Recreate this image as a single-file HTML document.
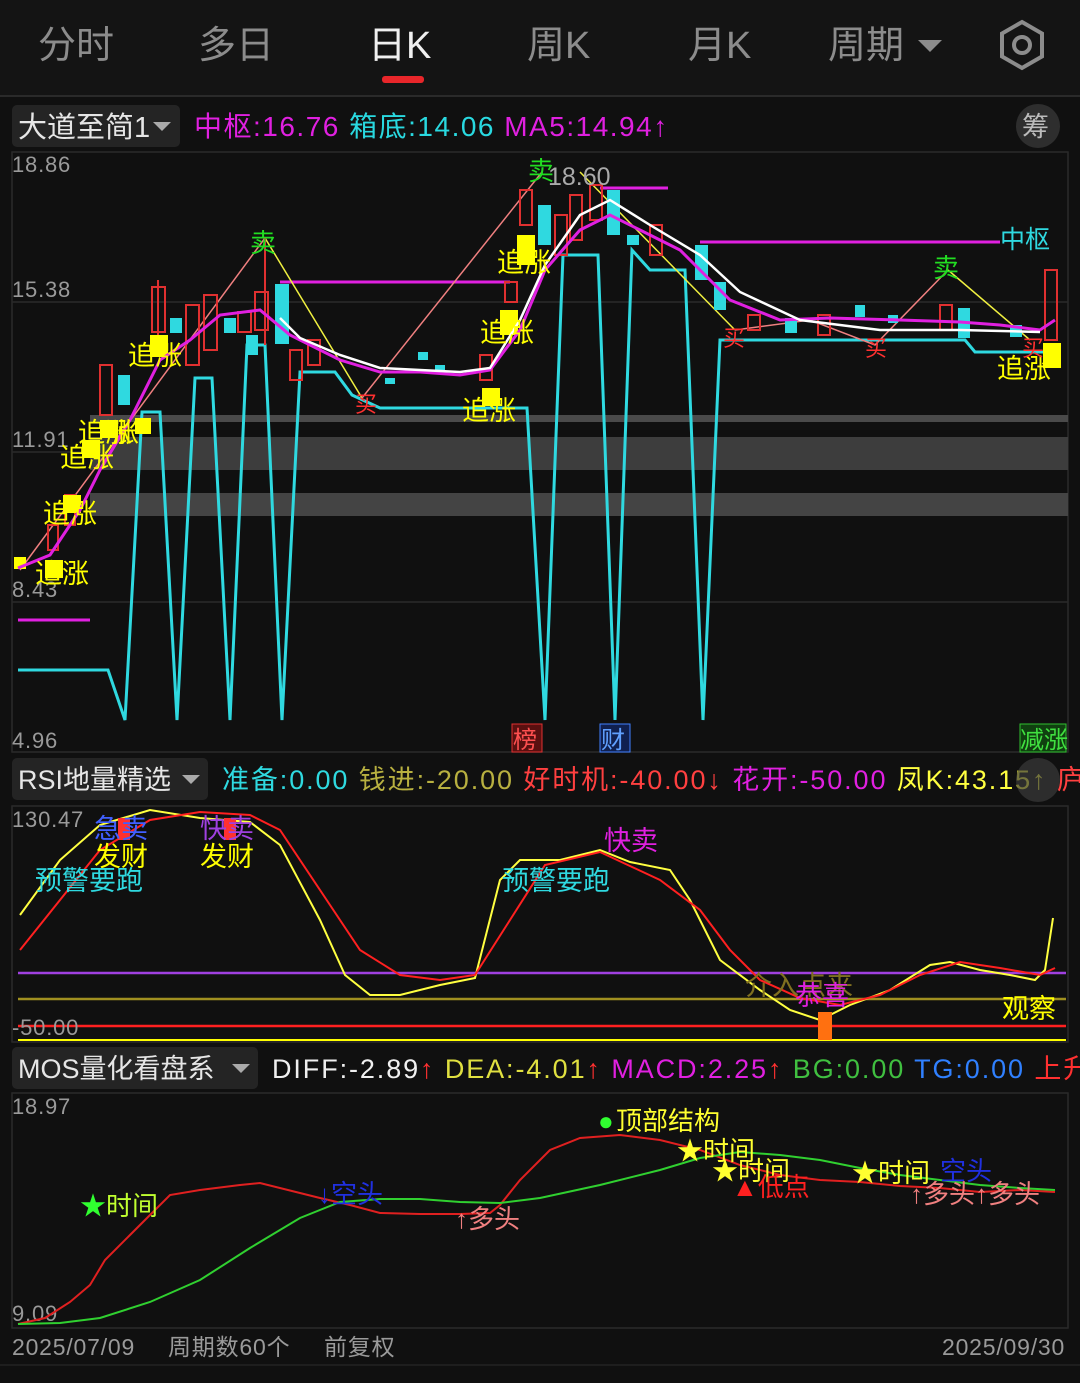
<!DOCTYPE html>
<html><head><meta charset="utf-8"><style>
body{margin:0;background:#101010;width:1080px;height:1383px;overflow:hidden;font-family:"Liberation Sans","Noto Sans CJK SC",sans-serif}
svg{position:absolute;left:0;top:0}
text{font-family:"Liberation Sans","Noto Sans CJK SC",sans-serif}
</style></head><body>
<svg width="1080" height="1383" viewBox="0 0 1080 1383">
<rect width="1080" height="1383" fill="#101010"/>
<rect width="1080" height="95" fill="#141414"/>
<g font-size="38" fill="#8c8c8c">
<text x="38" y="58">分时</text><text x="198" y="58">多日</text>
<text x="368" y="58" fill="#f0f0f0">日K</text>
<text x="527" y="58">周K</text><text x="688" y="58">月K</text><text x="828" y="58">周期</text>
</g>
<path d="M918 40h24l-12 12z" fill="#8c8c8c"/>
<rect x="382" y="76" width="42" height="7" rx="3" fill="#e8262a"/>
<path d="M1022 22l20 11.5v23L1022 68l-20-11.5v-23z" fill="none" stroke="#8c8c8c" stroke-width="4"/>
<circle cx="1022" cy="45" r="8" fill="none" stroke="#8c8c8c" stroke-width="4"/>
<line x1="0" y1="96" x2="1080" y2="96" stroke="#2a2a2a" stroke-width="2"/>

<rect x="12" y="105" width="168" height="42" rx="5" fill="#242424"/>
<text x="18" y="137" font-size="29" fill="#e6e6e6">大道至简1</text>
<path d="M153 122h18l-9 9z" fill="#aaa"/>
<text x="194" y="136" font-size="28" letter-spacing="1.5"><tspan fill="#e020e0">中枢:16.76 </tspan><tspan fill="#29d9e0">箱底:14.06 </tspan><tspan fill="#e020e0">MA5:14.94↑</tspan></text>
<circle cx="1038" cy="126" r="22" fill="#2e2e2e"/><text x="1022" y="136" font-size="27" fill="#bbb">筹</text>
<rect x="12" y="152" width="1056" height="600" fill="none" stroke="#2a2a2a" stroke-width="1.5"/>
<g stroke="#2a2a2a" stroke-width="1.5"><line x1="12" y1="302" x2="1068" y2="302"/><line x1="12" y1="452" x2="1068" y2="452"/><line x1="12" y1="602" x2="1068" y2="602"/></g>
<rect x="90" y="415" width="978" height="7" fill="#4a4a4a"/>
<rect x="90" y="437" width="978" height="33" fill="#3d3d3d"/>
<rect x="90" y="493" width="978" height="23" fill="#444"/>
<g font-size="22" fill="#9a9a9a" letter-spacing="0.8"><text x="12" y="172">18.86</text><text x="12" y="297">15.38</text><text x="12" y="447">11.91</text><text x="12" y="597">8.43</text><text x="12" y="748">4.96</text></g>

<polyline fill="none" stroke="#2fd9e0" stroke-width="3" points="18,670 108,670 125,720 142,412 160,412 177,720 195,378 212,378 230,720 247,345 265,345 282,720 300,372 335,372 352,395 380,408 527,408 545,720 563,255 598,255 615,720 632,250 650,270 685,270 703,720 720,340 965,340 975,352 1060,352"/>
<g stroke="#e020e0" stroke-width="3"><line x1="280" y1="282" x2="510" y2="282"/><line x1="600" y1="188" x2="668" y2="188"/><line x1="700" y1="242" x2="1000" y2="242"/><line x1="18" y1="620" x2="90" y2="620"/></g>
<polyline fill="none" stroke="#f08080" stroke-width="1.5" points="20,570 265,238"/>
<polyline fill="none" stroke="#f0f040" stroke-width="1.5" points="265,238 362,398"/>
<polyline fill="none" stroke="#f08080" stroke-width="1.5" points="362,398 542,172"/>
<polyline fill="none" stroke="#f0f040" stroke-width="1.5" points="580,172 735,330"/>
<polyline fill="none" stroke="#f08080" stroke-width="1.5" points="735,330 810,320 875,345 948,270"/>
<polyline fill="none" stroke="#f0f040" stroke-width="1.5" points="948,270 1030,340"/>
<g stroke="#e03030" stroke-width="2" fill="none">
<rect x="48" y="525" width="10" height="25"/><rect x="65" y="495" width="10" height="30"/><rect x="100" y="365" width="12" height="50"/>
<rect x="152" y="287" width="13" height="45"/><rect x="186" y="305" width="13" height="60"/><rect x="204" y="295" width="13" height="55"/>
<rect x="238" y="312" width="13" height="20"/><rect x="255" y="292" width="13" height="38"/><rect x="290" y="350" width="12" height="30"/>
<rect x="308" y="340" width="12" height="25"/><rect x="480" y="355" width="12" height="25"/><rect x="505" y="282" width="12" height="20"/>
<rect x="520" y="190" width="12" height="35"/><rect x="555" y="215" width="12" height="40"/><rect x="570" y="195" width="12" height="45"/>
<rect x="590" y="185" width="12" height="35"/><rect x="650" y="225" width="12" height="30"/><rect x="748" y="315" width="12" height="15"/>
<rect x="818" y="315" width="12" height="20"/><rect x="940" y="305" width="12" height="25"/><rect x="1045" y="270" width="12" height="70"/>
<line x1="265" y1="238" x2="265" y2="345"/><line x1="158" y1="280" x2="158" y2="340"/>
</g>
<g fill="#2fd9e0">
<rect x="118" y="375" width="12" height="30"/><rect x="170" y="318" width="12" height="15"/><rect x="224" y="318" width="12" height="15"/>
<rect x="275" y="284" width="14" height="60"/><rect x="246" y="335" width="12" height="20"/><rect x="418" y="352" width="10" height="8"/>
<rect x="385" y="378" width="10" height="6"/><rect x="435" y="365" width="10" height="6"/><rect x="538" y="205" width="13" height="40"/>
<rect x="607" y="190" width="13" height="45"/><rect x="627" y="235" width="12" height="10"/><rect x="695" y="245" width="13" height="35"/>
<rect x="714" y="282" width="12" height="28"/><rect x="785" y="318" width="12" height="15"/><rect x="855" y="305" width="10" height="12"/>
<rect x="888" y="315" width="10" height="8"/><rect x="958" y="308" width="12" height="30"/><rect x="1010" y="325" width="12" height="12"/>
</g>
<g fill="#ffff00">
<rect x="14" y="557" width="12" height="12"/><rect x="45" y="560" width="18" height="18"/><rect x="63" y="495" width="18" height="18"/>
<rect x="82" y="440" width="18" height="18"/><rect x="100" y="420" width="18" height="18"/><rect x="135" y="418" width="16" height="16"/>
<rect x="150" y="335" width="18" height="22"/><rect x="482" y="388" width="18" height="18"/><rect x="500" y="310" width="18" height="25"/>
<rect x="517" y="235" width="18" height="30"/><rect x="1043" y="343" width="18" height="25"/>
</g>
<polyline fill="none" stroke="#e020e0" stroke-width="3" points="18,568 50,555 80,510 100,470 130,420 160,360 190,340 220,315 260,310 290,335 340,360 380,372 420,372 460,375 490,370 520,330 545,270 580,230 610,215 640,230 680,250 700,270 730,300 780,320 830,318 900,320 960,322 1000,325 1040,330 1055,320"/>
<polyline fill="none" stroke="#ffffff" stroke-width="2.5" points="280,318 300,338 340,355 380,368 420,370 460,372 490,368 520,320 545,265 580,215 610,200 650,225 700,255 740,292 800,320 880,330 960,330 1040,332"/>
<g font-size="27" fill="#ffff00">
<text x="128" y="365">追涨</text><text x="78" y="442">追涨</text><text x="112" y="442">涨</text><text x="60" y="467">追涨</text><text x="43" y="523">追涨</text><text x="35" y="583">追涨</text>
<text x="480" y="342">追涨</text><text x="462" y="420">追涨</text><text x="497" y="272">追涨</text><text x="997" y="378">追涨</text>
</g>
<g font-size="26" fill="#22dd22"><text x="250" y="252">卖</text><text x="528" y="180">卖</text><text x="933" y="277">卖</text></g>
<g font-size="22" fill="#ff3030"><text x="355" y="412">买</text><text x="723" y="346">买</text><text x="865" y="356">买</text><text x="1022" y="356">买</text></g>
<text x="548" y="185" font-size="25" fill="#aaa">18.60</text>
<text x="1000" y="248" font-size="25" fill="#2fd9e0">中枢</text>
<rect x="512" y="724" width="30" height="28" fill="#5a1010" stroke="#e03030"/><text x="513" y="748" font-size="24" fill="#ff5050">榜</text>
<rect x="600" y="724" width="30" height="28" fill="#102050" stroke="#4080ff"/><text x="601" y="748" font-size="24" fill="#60a0ff">财</text>
<rect x="1020" y="724" width="46" height="28" fill="#104010" stroke="#30c030"/><text x="1020" y="748" font-size="24" fill="#40e040">减涨</text>

<rect x="12" y="758" width="196" height="42" rx="5" fill="#242424"/>
<text x="18" y="789" font-size="27" fill="#e6e6e6">RSI地量精选</text>
<path d="M182 775h18l-9 9z" fill="#aaa"/>
<text x="222" y="789" font-size="27" letter-spacing="1.9"><tspan fill="#2fd9e0">准备:0.00 </tspan><tspan fill="#b8b040">钱进:-20.00 </tspan><tspan fill="#ff4040">好时机:-40.00↓ </tspan><tspan fill="#e020e0">花开:-50.00 </tspan><tspan fill="#ffff40">凤K:43.15↑ </tspan><tspan fill="#ff4040">庐</tspan></text>
<circle cx="1038" cy="780" r="22" fill="#3a3a3a" opacity="0.7"/>
<rect x="12" y="806" width="1056" height="236" fill="none" stroke="#2a2a2a" stroke-width="1.5"/>
<text x="12" y="827" font-size="22" fill="#9a9a9a" letter-spacing="0.8">130.47</text>
<line x1="18" y1="973" x2="1066" y2="973" stroke="#a040e0" stroke-width="2.5"/>
<line x1="18" y1="999" x2="1066" y2="999" stroke="#a09020" stroke-width="2.5"/>
<line x1="18" y1="1026" x2="1066" y2="1026" stroke="#ff2020" stroke-width="2.5"/>
<line x1="18" y1="1040" x2="1066" y2="1040" stroke="#ffff00" stroke-width="2"/>
<text x="12" y="1035" font-size="22" fill="#9a9a9a" letter-spacing="0.8">-50.00</text>
<polyline fill="none" stroke="#ffff40" stroke-width="2" points="20,915 60,860 100,825 150,810 200,818 250,822 280,845 320,920 345,975 370,995 400,995 440,985 475,978 500,880 520,860 560,860 600,850 630,862 670,870 690,900 720,960 760,990 790,1010 820,1020 850,1005 890,990 930,965 950,962 980,970 1010,975 1035,980 1045,970 1053,918"/>
<polyline fill="none" stroke="#ff2020" stroke-width="2" points="20,950 60,900 100,850 150,820 200,812 250,815 280,830 320,890 360,950 400,975 440,980 475,975 510,920 545,865 600,852 660,880 700,910 730,950 760,980 800,998 840,1005 880,995 920,975 960,962 1000,968 1040,975 1055,968"/>
<rect x="118" y="818" width="12" height="22" fill="#ff3030"/><rect x="224" y="818" width="12" height="22" fill="#ff3030"/><rect x="818" y="1012" width="14" height="28" fill="#ff7010"/>
<g font-size="27">
<text x="94" y="838" fill="#4060ff">急卖</text><text x="94" y="866" fill="#ffff00">发财</text><text x="35" y="890" fill="#2fd9e0">预警要跑</text>
<text x="200" y="838" fill="#a040e0">快卖</text><text x="200" y="866" fill="#ffff00">发财</text>
<text x="604" y="850" fill="#e020e0">快卖</text><text x="502" y="890" fill="#2fd9e0">预警要跑</text>
<text x="745" y="995" fill="#807020">介入点来</text><text x="795" y="1005" fill="#e020e0">恭喜</text><text x="1002" y="1018" fill="#ffff00">观察</text>
</g>

<rect x="12" y="1047" width="246" height="42" rx="5" fill="#242424"/>
<text x="18" y="1078" font-size="27" fill="#e6e6e6">MOS量化看盘系</text>
<path d="M232 1064h18l-9 9z" fill="#aaa"/>
<text x="272" y="1078" font-size="27" letter-spacing="1.9"><tspan fill="#f0f0f0">DIFF:-2.89</tspan><tspan fill="#ff3030">↑ </tspan><tspan fill="#e0e040">DEA:-4.01</tspan><tspan fill="#ff3030">↑ </tspan><tspan fill="#e020e0">MACD:2.25</tspan><tspan fill="#ff3030">↑ </tspan><tspan fill="#40c040">BG:0.00 </tspan><tspan fill="#3080ff">TG:0.00 </tspan><tspan fill="#ff3030">上升</tspan></text>
<rect x="12" y="1093" width="1056" height="235" fill="none" stroke="#2a2a2a" stroke-width="1.5"/>
<text x="12" y="1114" font-size="22" fill="#9a9a9a" letter-spacing="0.8">18.97</text>
<text x="12" y="1321" font-size="22" fill="#9a9a9a" letter-spacing="0.8">9.09</text>
<polyline fill="none" stroke="#e02020" stroke-width="2" points="18,1324 45,1318 70,1302 90,1285 105,1260 130,1235 150,1215 170,1195 200,1190 240,1185 260,1183 320,1198 350,1205 380,1213 420,1214 460,1214 490,1213 500,1205 520,1180 550,1150 580,1138 620,1135 660,1140 700,1150 740,1165 780,1175 820,1180 860,1182 900,1186 940,1188 980,1192 1020,1190 1055,1192"/>
<polyline fill="none" stroke="#30d030" stroke-width="2" points="18,1324 60,1323 100,1318 150,1302 200,1280 250,1248 300,1218 340,1202 380,1199 420,1199 460,1202 500,1203 540,1198 600,1185 660,1170 700,1158 740,1152 780,1155 820,1160 860,1168 900,1175 940,1180 980,1185 1020,1188 1055,1190"/>
<g font-size="26">
<text x="80" y="1215" fill="#30ff30">★</text><text x="106" y="1215" fill="#c0ff30">时间</text>
<text x="318" y="1203" fill="#2030e0">↓空头</text><text x="455" y="1228" fill="#f08080">↑多头</text>
<text x="598" y="1130" fill="#30ff30">●</text><text x="616" y="1130" fill="#ffff30">顶部结构</text>
<text x="677" y="1160" fill="#ffff30">★时间</text><text x="712" y="1180" fill="#ffff30">★时间</text>
<text x="732" y="1196" fill="#ff2020">▲低点</text>
<text x="852" y="1182" fill="#ffff30">★时间</text><text x="940" y="1180" fill="#2030e0">空头</text>
<text x="910" y="1203" fill="#f08080">↑多头↑多头</text>
</g>
<line x1="0" y1="1365" x2="1080" y2="1365" stroke="#222" stroke-width="1.5"/>
<g font-size="23" fill="#9a9a9a" letter-spacing="0.8"><text x="12" y="1355">2025/07/09</text><text x="168" y="1355">周期数60个</text><text x="324" y="1355">前复权</text><text x="942" y="1355">2025/09/30</text></g>
</svg>
</body></html>
